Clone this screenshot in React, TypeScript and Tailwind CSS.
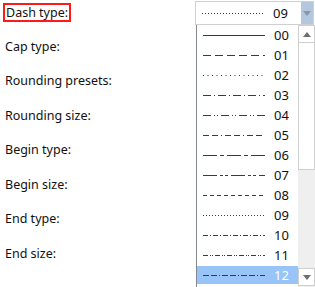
const labels = [
  'Cap type:',
  'Rounding presets:',
  'Rounding size:',
  'Begin type:',
  'Begin size:',
  'End type:',
  'End size:'
]

const dashes: { id: string; dash?: string }[] = [
  { id: '00' },
  { id: '01', dash: '8 4' },
  { id: '02', dash: '1 3.5' },
  { id: '03', dash: '8 3 1 3' },
  { id: '04', dash: '8 3 1 2 1 3' },
  { id: '05', dash: '6 3 6 3 1 3' },
  { id: '06', dash: '14 3 4 3' },
  { id: '07', dash: '14 3 3 2 3 3' },
  { id: '08', dash: '4 3' },
  { id: '09', dash: '1 2' },
  { id: '10', dash: '5 2 1 2' },
  { id: '11', dash: '5 2 1 1 1 2' },
  { id: '12', dash: '6 2 6 2 1 2' }
]

const DashLine = ({ dash }: { dash?: string }) => (
  <svg width="62" height="3" className="block">
    <line x1="0" y1="1.5" x2="62" y2="1.5" stroke="#3a3a3a" strokeWidth="1" strokeDasharray={dash} />
  </svg>
)

const Arrow = ({ up, color = '#6f6f6f' }: { up?: boolean; color?: string }) => (
  <svg width="8" height="5" viewBox="0 0 8 5">
    {up ? <path d="M0 5 L4 0 L8 5 Z" fill={color} /> : <path d="M0 0 L8 0 L4 5 Z" fill={color} />}
  </svg>
)

export default function App() {
  return (
    <div
      className="relative w-[315px] h-[287px] overflow-hidden bg-white text-[12.5px] text-[#111]"
      style={{ fontFamily: '"Noto Sans", "Liberation Sans", sans-serif' }}
    >
      <div className="flex h-[25px] items-center justify-between">
        <span className="ml-[3px] border-2 border-[#ff1a1a] px-[1px] leading-[15px]">Dash type:</span>
        <div className="mr-[1px] mt-[1px] flex h-[24px] w-[119px] items-center border border-[#d0d0d0]">
          <div className="flex flex-1 items-center pl-[6px]">
            <DashLine dash="1 2" />
            <span className="ml-[9px] text-[13px] leading-none">09</span>
          </div>
          <div className="flex h-full w-[12px] items-center justify-center bg-[#b3c8de]">
            <Arrow color="#8a96a6" />
          </div>
        </div>
      </div>

      <div className="mt-[4.75px] flex flex-col">
        {labels.map((l) => (
          <div key={l} className="flex h-[34.5px] items-center pl-[5px]">
            {l}
          </div>
        ))}
      </div>

      <div className="absolute left-[196px] top-[25px] flex h-[262px] w-[119px] border-l border-[#828790] bg-white">
        <div className="flex flex-1 flex-col">
          {dashes.map((d) => {
            const sel = d.id === '12'
            return (
              <div
                key={d.id}
                className={`flex shrink-0 items-center pl-[6px] text-[13px] ${sel ? 'mt-[1px] h-[18px] bg-[#99c4f8] text-white' : 'h-[20px]'}`}
              >
                <DashLine dash={d.dash} />
                <span className="ml-[9px] leading-none">{d.id}</span>
              </div>
            )
          })}
        </div>
        <div className="flex w-[17px] flex-col bg-[#efefef]">
          <div className="flex h-[18px] items-center justify-center border border-[#cfcfcf] bg-white">
            <Arrow up />
          </div>
          <div className="h-[127px] border border-t-0 border-[#cfcfcf] bg-white" />
          <div className="flex-1" />
          <div className="mb-[1px] flex h-[18px] items-center justify-center border border-[#cfcfcf] bg-white">
            <Arrow />
          </div>
        </div>
      </div>
    </div>
  )
}
